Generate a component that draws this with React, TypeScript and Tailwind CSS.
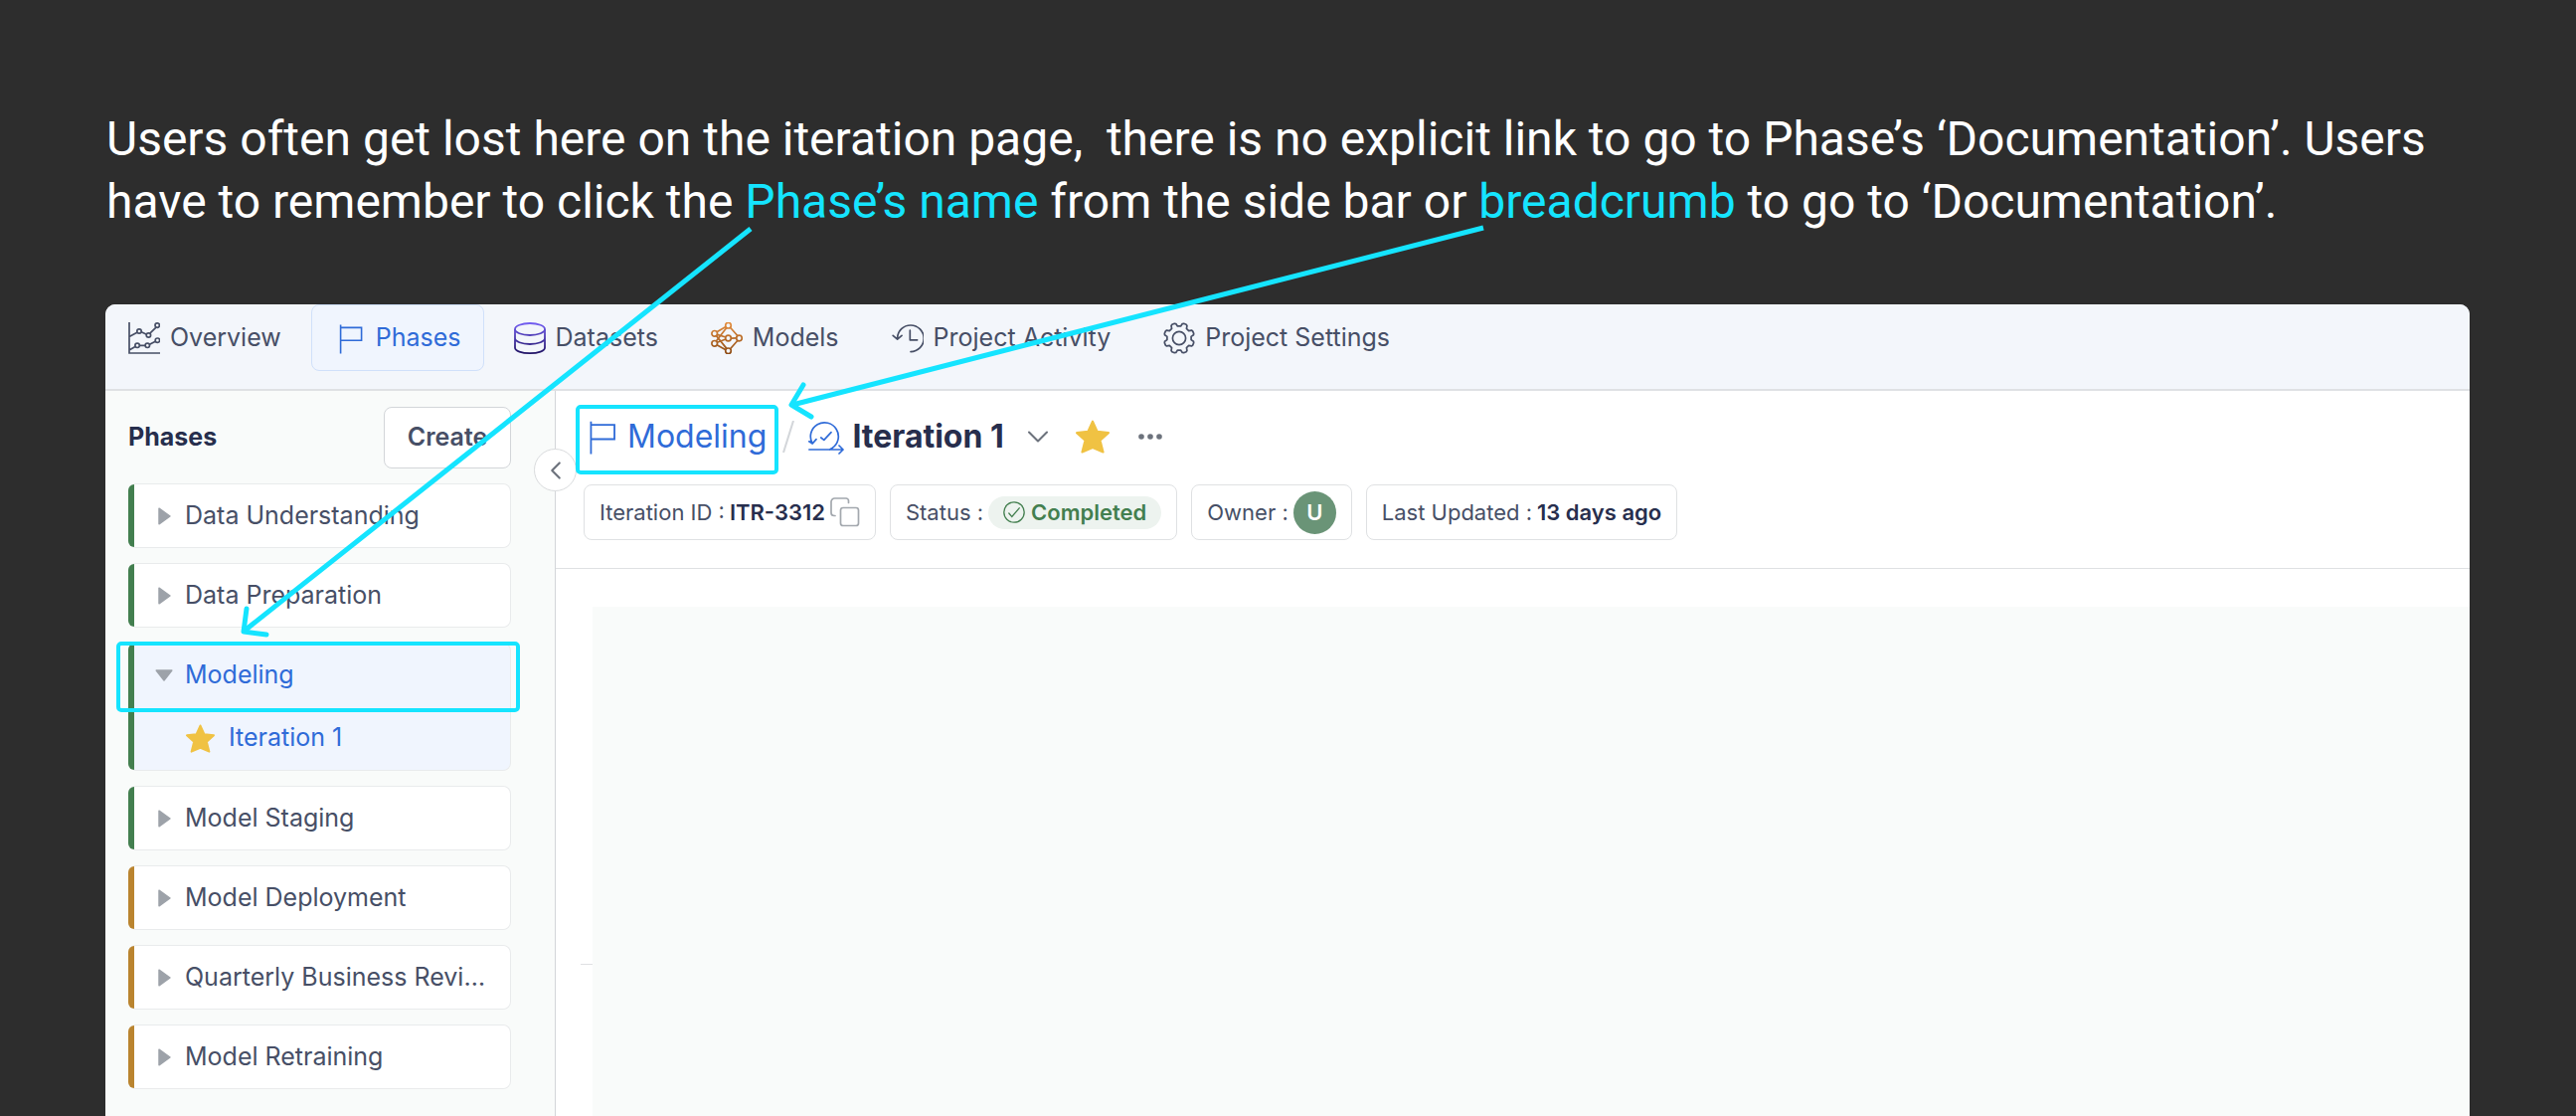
import React from 'react';
import { ChevronDown, ChevronLeft } from 'lucide-react';

const phases = [
  { name: 'Data Understanding', done: true },
  { name: 'Data Preparation', done: true },
  { name: 'Modeling', done: true, iterations: ['Iteration 1'] },
  { name: 'Model Staging', done: true },
  { name: 'Model Deployment', done: false },
  { name: 'Quarterly Business Review', done: false },
  { name: 'Model Retraining', done: false },
];

const modelNodes = [[17.5, 3.2], [3.7, 11.3], [3.7, 21.3], [17.5, 16], [28.5, 16], [17.5, 28.8]];

// outline of an eight-toothed gear, centred on 16,16
const gearPath = Array.from({ length: 8 }, (_, i) => {
  const mid = 22.5 + i * 45;
  return [[12.2, -15], [14.8, -10], [15.4, -5], [15.4, 5], [14.8, 10], [12.2, 15]].map(([r, da]) => {
    const a = ((mid + da) * Math.PI) / 180;
    return `${(16 + r * Math.cos(a)).toFixed(2)} ${(16 + r * Math.sin(a)).toFixed(2)}`;
  }).join('L');
}).join('L');

function OverviewIcon() {
  return (
    <svg viewBox="0 0 32 32" className="size-8 shrink-0" fill="none" stroke="currentColor" strokeWidth="1.7">
      <path d="M1 0V31H32M1 14.5L8.9 10.2M13.2 9.8L18.5 12.2M21.8 11.2L28 5.2M1 28L7 24.5M11.4 23.4H17M21.5 22.3L27.3 19.2" />
      <circle cx="11" cy="9" r="2.2" />
      <circle cx="20.4" cy="13" r="2.2" />
      <circle cx="29.2" cy="3.1" r="2.2" />
      <circle cx="9.1" cy="23.3" r="2.2" />
      <circle cx="19.3" cy="23.3" r="2.2" />
      <circle cx="29.4" cy="18.2" r="2.2" />
    </svg>
  );
}

function FlagIcon({ className }: any) {
  return (
    <svg viewBox="0 0 32 32" className={className} fill="none" stroke="currentColor" strokeWidth="1.6">
      <path d="M6.6 2.5V31.5M6.6 5.4H27.6V18.2H6.6" />
    </svg>
  );
}

function DatasetsIcon() {
  return (
    <svg viewBox="0 0 32 32" className="size-8 shrink-0" fill="none" stroke="url(#datasets)" strokeWidth="1.8">
      <defs>
        <linearGradient id="datasets" x1="0" y1="0" x2="0" y2="32" gradientUnits="userSpaceOnUse">
          <stop stopColor="#7560f5" />
          <stop offset="1" stopColor="#1f1263" />
        </linearGradient>
      </defs>
      <ellipse cx="16" cy="7" rx="15" ry="6" />
      <path d="M1 7V25.5C1 28.8 7.7 31.1 16 31.1S31 28.8 31 25.5V7M1 16C1 19.3 7.7 22 16 22S31 19.3 31 16" />
    </svg>
  );
}

function ModelsIcon() {
  return (
    <svg viewBox="0 0 32 32" className="size-8 shrink-0" fill="none" stroke="url(#models)" strokeWidth="1.7">
      <defs>
        <linearGradient id="models" x1="0" y1="0" x2="0" y2="32" gradientUnits="userSpaceOnUse">
          <stop stopColor="#e58f40" />
          <stop offset="1" stopColor="#8d4b14" />
        </linearGradient>
      </defs>
      <path d="M19.5 5.2L27 13.8M19.5 26.8L27 18.2M20.3 16.1L25.7 15.9M6 9.8L15 4.5M6.3 12.4L15 15M6.3 20.3L15 17M6 22.8L15 27.8M5.3 19L15.8 5.6M5.3 13.4L15.8 26.4" />
      {modelNodes.map(([cx, cy]) => (
        <circle key={`${cx}-${cy}`} cx={cx} cy={cy} r="2.8" />
      ))}
    </svg>
  );
}

function ActivityIcon() {
  return (
    <svg viewBox="0 0 32 32" className="size-8 shrink-0" fill="none" stroke="currentColor" strokeWidth="1.7" strokeLinecap="round" strokeLinejoin="round">
      <path d="M5.6 17V16A13.3 13.3 0 1 1 19 29.6M1.2 13.4L5.6 17.2L10 13.4M18.3 8.2V17.8H25.6" />
    </svg>
  );
}

function SettingsIcon() {
  return (
    <svg viewBox="0 0 32 32" className="size-8 shrink-0" fill="none" stroke="currentColor" strokeWidth="1.7" strokeLinejoin="round">
      <path d={`M${gearPath}Z`} />
      <circle cx="16" cy="16" r="6.6" />
    </svg>
  );
}

function IterationIcon() {
  return (
    <svg viewBox="0 0 36 36" className="size-9 shrink-0" fill="none" stroke="#2f6bd8" strokeWidth="1.7" strokeLinecap="round" strokeLinejoin="round">
      <path d="M4 24.5A14 14 0 1 1 24 29.5L21.5 31M.8 22.8L4.2 25L8 20.6M.8 31H35M31 27L35 31L31 35M12.8 19L15.8 21.4L23 13.6" />
    </svg>
  );
}

function StarIcon({ className }: any) {
  return (
    <svg viewBox="0 0 32 32" className={className} fill="#f0c243" stroke="#f0c243" strokeWidth="2" strokeLinejoin="round">
      <path d="M16 1.5L20.4 11.2L31 12.4L23.1 19.6L25.9 30.6L16 26.4L6.1 30.6L8.9 19.6L1 12.4L11.6 11.2Z" />
    </svg>
  );
}

function CopyIcon() {
  return (
    <svg viewBox="0 0 30 30" className="size-[30px]" fill="none" stroke="#a3a8ae" strokeWidth="1.7" strokeLinecap="round">
      <rect x="10.5" y="10.5" width="18" height="18" rx="2.5" />
      <path d="M18.5 5.5V3.5A2.5 2.5 0 0 0 16 1H4.5A3.5 3.5 0 0 0 1 4.5V15.5A3 3 0 0 0 4 18.5H5" />
    </svg>
  );
}

function CheckIcon() {
  return (
    <svg viewBox="0 0 22 22" className="size-[22px]" fill="none" stroke="currentColor" strokeWidth="1.3" strokeLinecap="round">
      <circle cx="11" cy="11" r="10.2" />
      <path d="M5.8 12L8.8 15.4L16.2 6.8" />
    </svg>
  );
}

function Caret({ open }: any) {
  return (
    <svg viewBox="0 0 18 18" className="size-[18px] shrink-0" fill="#9da2a9" stroke="#9da2a9" strokeWidth="1.5" strokeLinejoin="round">
      {open ? <path d="M1.2 4H16.8L9 14Z" /> : <path d="M4 1.2V16.8L15 9Z" />}
    </svg>
  );
}

function Chip({ label, children }: any) {
  return (
    <div className="flex h-14 items-center gap-[5px] rounded-lg border border-[#dfe1e3] px-[15px] text-[22px]">
      <span>{label} :</span>
      {children}
    </div>
  );
}

const tabs = [
  { name: 'Overview', icon: <OverviewIcon /> },
  { name: 'Phases', icon: <FlagIcon className="size-8 shrink-0" />, active: true },
  { name: 'Datasets', icon: <DatasetsIcon /> },
  { name: 'Models', icon: <ModelsIcon /> },
  { name: 'Project Activity', icon: <ActivityIcon /> },
  { name: 'Project Settings', icon: <SettingsIcon /> },
];

export default function App() {
  return (
    <div className="relative flex min-h-screen flex-col overflow-hidden bg-[#2d2d2d] pt-[108px] pr-[107px] pl-[106px] font-['Inter',sans-serif] text-[#474f66]">
      <h1 className="mb-[72px] pl-px font-['Roboto',sans-serif] text-[48px] leading-[63px] text-white">
        Users often get lost here on the iteration page,&nbsp; there is no explicit link to go to Phase’s ‘Documentation’. Users have to remember to click the <span className="text-[#15e4ff]">Phase’s name</span> from the side bar or <span className="text-[#15e4ff]">breadcrumb</span> to go to ‘Documentation’.
      </h1>

      <div className="flex flex-1 flex-col rounded-t-[10px] bg-white">
        <nav className="flex h-[87px] items-start gap-[7px] rounded-t-[10px] border-b-2 border-[#dfe1e4] bg-[#f3f6fb]">
          {tabs.map((tab) => (
            <a
              key={tab.name}
              href="#"
              className={
                tab.active
                  ? 'flex h-[67px] items-center gap-[10px] rounded-lg border border-[#d0e0fa] bg-[#f0f5fe] px-[22px] text-[25px] text-[#2f6bd8]'
                  : 'flex h-[67px] items-center gap-[10px] rounded-lg border border-transparent px-[22px] text-[25px]'
              }
            >
              {tab.icon}
              {tab.name}
            </a>
          ))}
        </nav>

        <div className="flex flex-1">
          <aside className="relative flex w-[453px] shrink-0 flex-col gap-[15px] border-r border-[#d3d6d9] bg-[#f9fbfa] pt-4 pr-[44px] pb-7 pl-[23px]">
            <div className="flex items-center justify-between">
              <h2 className="text-[25px] font-bold text-[#272e4d]">Phases</h2>
              <button className="h-[62px] w-32 rounded-lg border border-[#d3d6d9] bg-white text-[25px] font-semibold">Create</button>
            </div>

            <ul className="flex flex-col gap-[15px]">
              {phases.map((phase) => (
                <li
                  key={phase.name}
                  className={`relative rounded-lg border border-l-0 border-[#e9ebec] ${phase.iterations ? 'bg-[#f0f5fe]' : 'bg-white'}`}
                >
                  <span className={`absolute inset-y-0 left-0 w-[6px] rounded-l-md ${phase.done ? 'bg-[#437f4f]' : 'bg-[#ba842f]'}`} />
                  <button className={`relative flex h-[63px] w-full items-center gap-3 pr-4 pl-[27px] text-left text-[25px] ${phase.iterations ? 'text-[#2f6bd8]' : ''}`}>
                    <Caret open={phase.iterations} />
                    <span className="truncate">{phase.name}</span>
                    {phase.iterations && (
                      <span className="absolute -top-[2px] -right-[10px] -bottom-[6px] -left-3 rounded-[5px] border-4 border-[#15e4ff]" />
                    )}
                  </button>
                  {phase.iterations?.map((iteration) => (
                    <a key={iteration} href="#" className="flex h-16 items-center gap-[14px] pl-[58px] text-[25px] text-[#2f6bd8]">
                      <StarIcon className="size-[29px]" />
                      {iteration}
                    </a>
                  ))}
                </li>
              ))}
            </ul>

            <button className="absolute top-[58px] -right-[22px] z-10 flex size-[43px] items-center justify-center rounded-full border border-[#d9dbdd] bg-white text-[#6c727c]" aria-label="Collapse">
              <ChevronLeft size={30} strokeWidth={1.7} />
            </button>
          </aside>

          <main className="flex min-w-0 flex-1 flex-col">
            <header className="border-b border-[#dfe1e3] pt-[22px] pb-7 pl-7">
              <div className="flex h-12 items-center text-[32px]">
                <a href="#" className="relative z-10 flex h-12 items-center gap-2 text-[#2f6bd8]">
                  <FlagIcon className="size-9 shrink-0" />
                  Modeling
                  <span className="absolute -top-2 -right-3 -bottom-[14px] -left-2 rounded-[5px] border-4 border-[#15e4ff]" />
                </a>
                <svg viewBox="0 0 12 32" className="mr-[14px] ml-4 h-8 w-3" stroke="#d3d6da" strokeWidth="2">
                  <path d="M11 0L1 32" />
                </svg>
                <IterationIcon />
                <h2 className="ml-2 font-bold text-[#272e4d]">Iteration 1</h2>
                <button className="ml-4 text-[#6c727c]" aria-label="Switch iteration">
                  <ChevronDown size={36} strokeWidth={1.4} />
                </button>
                <button className="ml-5" aria-label="Favourite">
                  <StarIcon className="size-[34px]" />
                </button>
                <button className="ml-7" aria-label="More">
                  <svg viewBox="0 0 26 8" className="h-2 w-[26px]" fill="#6c727c">
                    <circle cx="4" cy="4" r="2.8" />
                    <circle cx="13" cy="4" r="2.8" />
                    <circle cx="22" cy="4" r="2.8" />
                  </svg>
                </button>
              </div>

              <div className="mt-6 flex gap-[14px]">
                <Chip label="Iteration ID">
                  <b className="font-semibold text-[#272e4d]">ITR-3312</b>
                  <button aria-label="Copy">
                    <CopyIcon />
                  </button>
                </Chip>
                <Chip label="Status">
                  <span className="flex h-[33px] items-center gap-[6px] rounded-full bg-[#edf3ef] px-[15px] font-semibold text-[#437f4f]">
                    <CheckIcon />
                    Completed
                  </span>
                </Chip>
                <Chip label="Owner">
                  <span className="flex size-[43px] items-center justify-center rounded-full bg-[#6a9477] font-semibold text-white">U</span>
                </Chip>
                <Chip label="Last Updated">
                  <b className="font-semibold text-[#272e4d]">13 days ago</b>
                </Chip>
              </div>
            </header>

            <div className="flex flex-1 pt-[38px] pl-[25px]">
              <div className="w-3 shrink-0 pt-[359px]">
                <hr className="border-[#dfe1e3]" />
              </div>
              <div className="flex-1 bg-[#f9fbfa]" />
            </div>
          </main>
        </div>
      </div>

      <svg className="pointer-events-none absolute top-0 left-0 z-20 h-[700px] w-[1600px]" fill="none" stroke="#15e4ff" strokeWidth="5" strokeLinejoin="round">
        <path d="M755 230L246 634M1492 229L797 407" />
        <path d="M248 612L245 635L268 638M808 387L796 407L816 419" strokeLinecap="round" />
      </svg>
    </div>
  );
}
